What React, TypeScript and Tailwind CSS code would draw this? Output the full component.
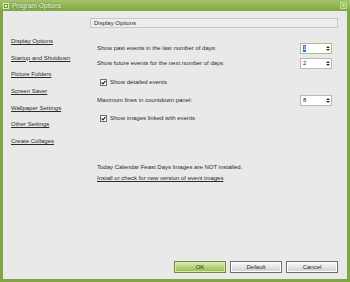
import React from "react";

const font = { fontFamily: '"Liberation Sans", Arial, sans-serif' };

function Spinner({ value, focused }: { value: string; focused?: boolean }) {
  return (
    <div
      className={`flex h-[11px] w-[32px] items-center border bg-white ${
        focused ? "border-[#a8c08a]" : "border-[#b8b8b8]"
      }`}
    >
      <div className="flex flex-1 items-center pl-[2px]">
        <span
          className={`text-[6px] leading-[7px] ${
            focused ? "bg-[#3470d0] text-white" : "text-[#2a2a2a]"
          }`}
        >
          {value}
        </span>
      </div>
      <div className="flex h-full w-[7px] flex-col items-center justify-center gap-[1px]">
        <div className="h-0 w-0 border-x-[2px] border-b-[2px] border-x-transparent border-b-[#333]" />
        <div className="h-0 w-0 border-x-[2px] border-t-[2px] border-x-transparent border-t-[#333]" />
      </div>
    </div>
  );
}

function Check({ label }: { label: string }) {
  return (
    <div className="flex h-[11px] items-center gap-[3px] pl-[3px]">
      <div className="flex h-[7px] w-[7px] items-center justify-center border border-[#707070] bg-white">
        <svg width="5" height="5" viewBox="0 0 5 5">
          <path d="M0.6 2.4 L2 3.9 L4.4 0.8" fill="none" stroke="#222" strokeWidth="1.1" />
        </svg>
      </div>
      <span className="text-[6px] leading-[7px] text-[#2a2a2a]">{label}</span>
    </div>
  );
}

function Btn({ label, primary }: { label: string; primary?: boolean }) {
  return (
    <div
      className={`flex h-[12px] w-[52px] items-center justify-center border text-[6px] leading-[7px] text-[#2a2a2a] ${
        primary
          ? "border-[#6d8f3c] bg-gradient-to-b from-[#e2f0c0] via-[#b4d27a] to-[#94bc4e] shadow-[inset_0_0_0_1px_#d6eab0]"
          : "border-[#6e6e6e] bg-gradient-to-b from-[#f8f8f8] via-[#e4e4e4] to-[#cfcfcf] shadow-[inset_0_0_0_1px_#ffffff]"
      }`}
    >
      {label}
    </div>
  );
}

const nav = [
  "Display Options",
  "Startup and Shutdown",
  "Picture Folders",
  "Screen Saver",
  "Wallpaper Settings",
  "Other Settings",
  "Create Collages",
];

export default function App() {
  return (
    <div
      className="flex h-[282px] w-[350px] flex-col bg-[#7ea643]"
      style={font}
    >
      {/* title bar */}
      <div className="flex h-[11px] items-center bg-gradient-to-b from-[#a3c567] to-[#7fa846] px-[3px]">
        <div className="flex h-[6px] w-[6px] items-center justify-center border border-[#d8e8b8] bg-[#6f9a35]">
          <div className="h-[2px] w-[2px] bg-[#e8f2d0]" />
        </div>
        <span className="ml-[3px] text-[6.5px] leading-[7px] text-[#f4f8e8] [text-shadow:0_0_2px_#3d5a17]">
          Program Options
        </span>
        <div className="ml-auto flex h-[7px] w-[7px] items-center justify-center border border-[#c2da96] bg-[#9cc060] text-[5px] leading-[5px] text-white">
          ×
        </div>
      </div>

      {/* body */}
      <div className="mx-[3px] mb-[3px] flex flex-1 bg-[#e9e9e9]">
        {/* nav */}
        <div className="flex w-[87px] flex-col gap-[8.7px] pl-[8px] pt-[26px]">
          {nav.map((n) => (
            <span
              key={n}
              className="h-[8px] text-[6px] leading-[8px] text-[#2a2a2a] underline decoration-[0.5px] underline-offset-[1px]"
            >
              {n}
            </span>
          ))}
        </div>

        {/* content */}
        <div className="flex flex-1 flex-col pr-[9px] pt-[7px]">
          <div className="flex h-[10px] items-center border border-[#c9c9c9] bg-[#ededed] pl-[3px] text-[6px] leading-[7px] text-[#2a2a2a]">
            Display Options
          </div>

          <div className="flex flex-col pl-[7px] pr-[6px]">
            <div className="mt-[15px] flex h-[11px] items-center justify-between">
              <span className="text-[6px] leading-[7px] text-[#2a2a2a]">
                Show past events in the last number of days:
              </span>
              <Spinner value="1" focused />
            </div>
            <div className="mt-[4px] flex h-[11px] items-center justify-between">
              <span className="text-[6px] leading-[7px] text-[#2a2a2a]">
                Show future events for the next number of days:
              </span>
              <Spinner value="2" />
            </div>
            <div className="mt-[8px]">
              <Check label="Show detailed events" />
            </div>
            <div className="mt-[7px] flex h-[11px] items-center justify-between">
              <span className="text-[6px] leading-[7px] text-[#2a2a2a]">
                Maximum lines in countdown panel:
              </span>
              <Spinner value="8" />
            </div>
            <div className="mt-[7px]">
              <Check label="Show images linked with events" />
            </div>

            <div className="mt-[38px] text-[6px] leading-[11px] text-[#2a2a2a]">
              Today Calendar Feast Days Images are NOT installed.
            </div>
            <div className="text-[6px] leading-[11px] text-[#2a2a2a] underline decoration-[0.5px] underline-offset-[1px]">
              Install or check for new version of event images
            </div>
          </div>

          <div className="mt-auto mb-[6px] flex justify-end gap-[4px]">
            <Btn label="OK" primary />
            <Btn label="Default" />
            <Btn label="Cancel" />
          </div>
        </div>
      </div>
    </div>
  );
}
